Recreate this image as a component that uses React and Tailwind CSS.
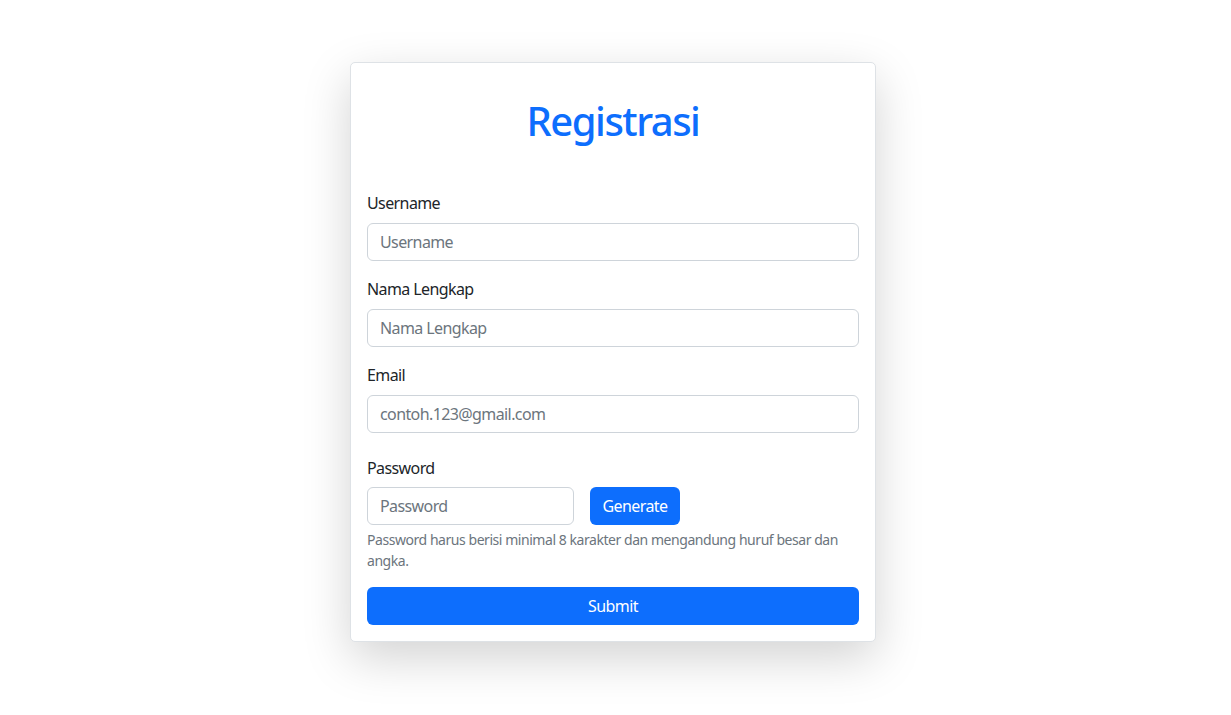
import React, { useState } from "react";

const Field = ({ label, placeholder, type = "text" }) => (
  <div className="mb-4">
    <label className="block mb-2 text-base leading-6 text-[#212529]">{label}</label>
    <input
      type={type}
      placeholder={placeholder}
      className="block w-full h-[38px] px-3 text-base tracking-[-0.6px] text-[#212529] bg-white border border-[#ced4da] rounded-[6px] placeholder:text-[#6c757d] outline-none"
    />
  </div>
);

const App = () => {
  const [password, setPassword] = useState("");

  const generate = () => {
    const chars = "ABCDEFGHJKLMNPQRSTUVWXYZabcdefghijkmnpqrstuvwxyz23456789";
    let out = "";
    for (let i = 0; i < 10; i++) out += chars[Math.floor(Math.random() * chars.length)];
    setPassword(out);
  };

  return (
    <div className="min-h-screen bg-white pt-[62px] pr-[5px] flex justify-center font-['Noto_Sans',sans-serif] tracking-[-0.6px]">
      <div className="w-[526px] h-fit bg-white border border-[#dee2e6] rounded-[5px] shadow-[0_1rem_3rem_rgba(0,0,0,0.175)]">
        <div className="p-4">
          {/* TITLE */}
          <h1 className="mt-[18px] mb-[46px] text-center text-[40px] leading-[48px] font-medium tracking-[-1.5px] text-[#0d6efd]">
            Registrasi
          </h1>

          <Field label="Username" placeholder="Username" />
          <Field label="Nama Lengkap" placeholder="Nama Lengkap" />
          <Field label="Email" placeholder="contoh.123@gmail.com" type="email" />

          {/* PASSWORD */}
          <div className="mt-[23px]">
            <label className="block mb-[7px] text-base leading-6 text-[#212529]">Password</label>
            <div className="flex gap-4">
              <input
                type="text"
                value={password}
                onChange={(e) => setPassword(e.target.value)}
                placeholder="Password"
                className="w-[207px] h-[38px] px-3 text-base tracking-[-0.6px] text-[#212529] bg-white border border-[#ced4da] rounded-[6px] placeholder:text-[#6c757d] outline-none"
              />
              <button
                onClick={generate}
                className="h-[38px] w-[90px] bg-[#0d6efd] text-white text-base rounded-[6px]"
              >
                Generate
              </button>
            </div>
            <p className="mt-1 text-[14px] leading-[21px] tracking-[-0.45px] text-[#6c757d]">
              Password harus berisi minimal 8 karakter dan mengandung huruf besar dan angka.
            </p>
          </div>

          <button className="mt-4 w-full h-[38px] bg-[#0d6efd] text-white text-base rounded-[6px]">
            Submit
          </button>
        </div>
      </div>
    </div>
  );
};

export default App;
